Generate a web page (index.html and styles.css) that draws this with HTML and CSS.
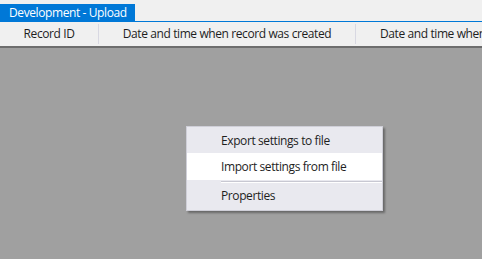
FILE: index.html
```html
<!DOCTYPE html>
<html lang="en">

<head>
    <meta charset="UTF-8">
    <title>Development - Upload</title>
    <link rel="stylesheet" href="styles.css">
</head>

<body>
    <div class="window">
        <!-- tab strip -->
        <div class="tabs">
            <div class="tab">Development - Upload</div>
        </div>
        <!-- column headers -->
        <div class="header">
            <div class="col col-id">Record ID</div>
            <div class="col col-created">Date and time when record was created</div>
            <div class="col col-more">Date and time when record was changed</div>
        </div>
        <!-- empty grid area -->
        <div class="workspace">
            <div class="menu">
                <div class="item">Export settings to file</div>
                <div class="item active">Import settings from file</div>
                <div class="sep"></div>
                <div class="item">Properties</div>
            </div>
        </div>
    </div>
</body>

</html>
```

FILE: styles.css
```css
body {
    margin: 0;
    padding: 0;
    background: #a0a0a0;
    font-family: "Open Sans", "Noto Sans", sans-serif;
    font-size: 12px;
    letter-spacing: -0.4px;
    color: #000;
    overflow: hidden;
}

.window {
    display: flex;
    flex-direction: column;
    height: 259px;
}

.tabs {
    height: 17px;
    padding-top: 4px;
    background: #f0f0f0;
    border-bottom: 1px solid #0078d7;
    display: flex;
}

.tab {
    width: 135px;
    height: 17px;
    line-height: 17px;
    padding-left: 9px;
    box-sizing: border-box;
    background: #0078d7;
    color: #fff;
    white-space: nowrap;
}

.header {
    height: 24px;
    background: #f0f0f0;
    border-bottom: 2px solid #6d6d6d;
    display: flex;
    align-items: center;
    white-space: nowrap;
    overflow: hidden;
}

.col {
    height: 20px;
    line-height: 20px;
    flex: none;
    text-align: center;
    border-right: 1px solid #d8d8e2;
    color: #1e1e1e;
}

.col-id {
    width: 98px;
}

.col-created {
    width: 256px;
}

.col-more {
    text-align: left;
    padding-left: 24px;
    border-right: none;
}

.workspace {
    flex: 1;
    position: relative;
    background: #a0a0a0;
}

.menu {
    position: absolute;
    left: 186px;
    top: 78px;
    width: 195px;
    padding: 2px 0;
    background: #e9e9ef;
    border: 1px solid #cfcfd8;
    box-shadow: 2px 2px 2px rgba(0, 0, 0, 0.35);
}

.item {
    height: 24px;
    line-height: 24px;
    padding-left: 34px;
    color: #1e1e1e;
}

.item.active {
    height: 27px;
    line-height: 27px;
    background: #fff;
}

.sep {
    height: 1px;
    margin: 1px 0 1px 34px;
    background: #c8c8d2;
    border-bottom: 1px solid #fff;
}
```
